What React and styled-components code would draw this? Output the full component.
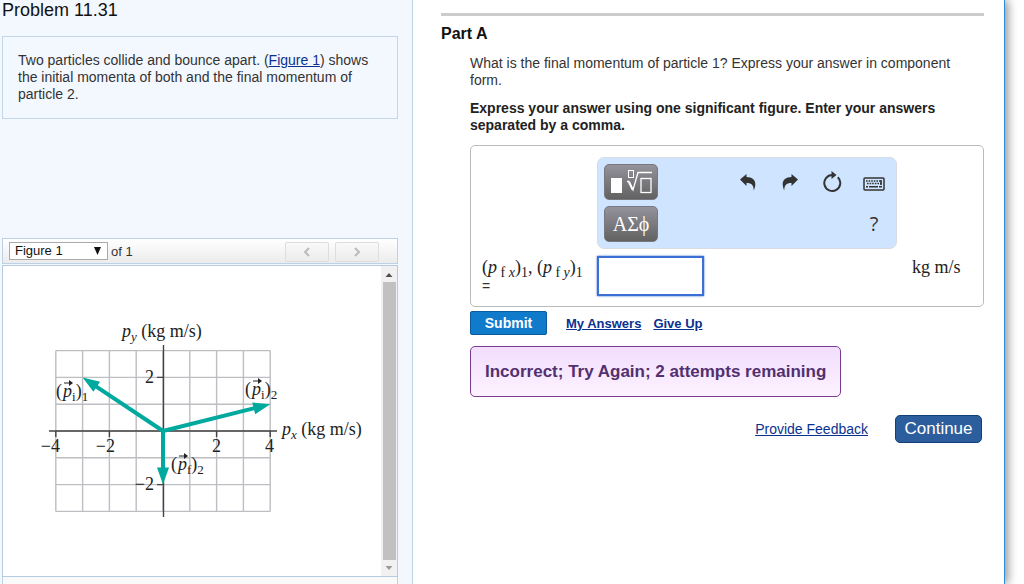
import React from "react";
import styled, { createGlobalStyle } from "styled-components";

const sans = '"Liberation Sans", Arial, sans-serif';
const serif = '"Liberation Serif", "Times New Roman", serif';

const Global = createGlobalStyle`
  *, *::before, *::after { box-sizing: border-box; }
  html, body, #root { height: 100%; }
  body {
    margin: 0;
    overflow: hidden;
    background: #fff;
    color: #333;
    font: 14px/17px ${sans};
  }
`;

const Shell = styled.div`
  display: flex;
  height: 100%;
  margin-right: 19px;
  border-right: 1px solid #2b8fdc;
  box-shadow: 2px 0 10px rgba(0, 0, 0, 0.5);
  background: #fff;
`;

const Sidebar = styled.aside`
  flex: 0 0 413px;
  display: flex;
  flex-direction: column;
  padding: 0 14px 0 2px;
  border-right: 1px solid #bcd1e4;
  background: #f3f8ff;
`;

const ProblemTitle = styled.h1`
  margin: 0 0 16px;
  color: #111;
  font-size: 18px;
  font-weight: 400;
  line-height: 20px;
`;

const Statement = styled.p`
  margin: 0 0 119px;
  padding: 15px;
  border: 1px solid #c4d6ea;
`;

const Link = styled.a`
  color: #0b318f;
  font-size: ${(p) => (p.$strong ? "13px" : "14px")};
  font-weight: ${(p) => (p.$strong ? 700 : 400)};
`;

const FigureBar = styled.div`
  display: flex;
  flex-shrink: 0;
  align-items: center;
  gap: 3px;
  height: 26px;
  margin-bottom: 1px;
  padding: 0 18px 0 6px;
  border: 1px solid #bcd1e8;
  background: linear-gradient(#fff, #ebebeb);
  font-size: 13px;
`;

const FigureSelect = styled.span`
  position: relative;
  display: flex;
  width: 99px;

  select {
    width: 100%;
    height: 18px;
    padding: 0 5px;
    border: 1px solid #aaa;
    border-radius: 0;
    appearance: none;
    background: #fff;
    color: #111;
    font: 13px/16px ${sans};
  }

  svg {
    position: absolute;
    top: 5px;
    right: 7px;
    pointer-events: none;
  }
`;

const Pager = styled.div`
  display: flex;
  gap: 6px;
  margin-left: auto;
  padding-top: 2px;
`;

const PagerButton = styled.button`
  display: flex;
  align-items: center;
  justify-content: center;
  width: 44px;
  height: 20px;
  padding: 0;
  border: 1px solid #ddd;
  border-radius: 2px;
  background: linear-gradient(#f9f9f9, #ececec);
`;

const FigureFrame = styled.div`
  display: flex;
  flex-shrink: 0;
  justify-content: space-between;
  height: 312px;
  border: 1px solid #b5cbe2;
  background: #fff;
`;

const Plot = styled.svg`
  display: block;
  margin: 52px 0 0 29px;
  font-family: ${serif};
  font-size: 18px;
  fill: #222;
`;

const ScrollTrack = styled.div`
  display: flex;
  flex-direction: column;
  align-items: center;
  width: 16px;
  background: #f1f1f1;

  svg { flex: 0 0 16px; }
`;

const ScrollThumb = styled.div`
  flex: 1;
  width: 13px;
  background: #c1c1c1;
`;

const NextPanel = styled.div`
  flex: 1;
  border: 1px solid #bcd1e8;
  border-width: 0 1px;
  background: #fafafa;
`;

const Main = styled.main`
  flex: 1;
  min-width: 0;
  padding: 13px 20px 0 28px;
`;

const Part = styled.section`
  border-top: 3px solid #ccc;
`;

const PartTitle = styled.h2`
  margin: 9px 0 12px;
  color: #111;
  font-size: 16px;
  line-height: 18px;
`;

const PartBody = styled.div`
  padding-left: 29px;
`;

const Prompt = styled.p`
  margin: 0 0 11px;
  font-weight: ${(p) => (p.$strong ? 700 : 400)};
  color: ${(p) => (p.$strong ? "#222" : "#333")};
`;

const AnswerBox = styled.form`
  display: grid;
  grid-template-columns: 116px 300px 1fr;
  gap: 7px 0;
  height: 162px;
  padding: 11px 10px;
  border: 1px solid #bbb;
  border-radius: 5px;
`;

const MathBar = styled.div`
  grid-column: 2;
  display: flex;
  justify-content: space-between;
  height: 92px;
  padding: 6px;
  border: 1px solid #d8dde4;
  border-radius: 7px;
  background: #cfe5ff;
`;

const MathKeys = styled.div`
  display: flex;
  flex-direction: column;
  gap: 6px;
`;

const MathKey = styled.button`
  display: flex;
  align-items: center;
  justify-content: center;
  width: 54px;
  height: 36px;
  padding: 0;
  border: 1px solid #77777d;
  border-radius: 5px;
  background: linear-gradient(#94929b, #626262);
  color: #fff;
  font: 20px/24px ${serif};
`;

const Tools = styled.div`
  display: grid;
  grid-template-columns: repeat(4, 42px);
  grid-template-rows: 36px 36px;
  gap: 6px 0;
  margin-right: -5px;
`;

const ToolButton = styled.button`
  display: flex;
  align-items: center;
  justify-content: center;
  padding: 0;
  border: 0;
  background: none;
  color: #333;
  font: 20px/24px "Open Sans", sans-serif;
  grid-column: ${(p) => p.$column};
`;

const AnswerLabel = styled.label`
  grid-column: 1;
  padding-left: 1px;
`;

const MathText = styled.span`
  color: #222;
  font-family: ${serif};
  font-size: 18px;
  line-height: 22px;
  white-space: nowrap;

  sub {
    font-size: 14px;
    line-height: 0;
    vertical-align: -4px;
  }
`;

const AnswerInput = styled.input`
  width: 107px;
  height: 40px;
  padding: 0 6px;
  border: 2px solid #3b6fd4;
  box-shadow: 0 0 2px #3b6fd4;
  outline: 0;
  font: 18px/22px ${serif};
`;

const Units = styled.div`
  padding-left: 15px;
`;

const Actions = styled.div`
  display: flex;
  align-items: center;
  gap: 12px;
  margin: 4px 0 11px;
`;

const Submit = styled.button`
  width: 77px;
  height: 24px;
  margin-right: 7px;
  padding: 0;
  border: 1px solid #0b5c9f;
  border-radius: 2px;
  background: #107acb;
  color: #fff;
  font: 700 14px/18px ${sans};
`;

const Result = styled.div`
  width: fit-content;
  padding: 16px 14px;
  border: 1px solid #783d91;
  border-radius: 5px;
  background: linear-gradient(#f2defd, #fdf2ff);
  color: #52306f;
  font-size: 17px;
  font-weight: 700;
`;

const Footer = styled.footer`
  display: flex;
  align-items: center;
  justify-content: flex-end;
  gap: 27px;
  margin: 18px 2px 0 0;
`;

const Continue = styled.button`
  width: 87px;
  height: 28px;
  padding: 0;
  border: 1px solid #123f78;
  border-radius: 5px;
  background: #2c5d9d;
  color: #fff;
  font: 17px/20px ${sans};
`;

const UNIT = 26.8;
const TEAL = "#00a99d";

function Vector({ x, y }) {
  const tipX = x * UNIT;
  const tipY = -y * UNIT;
  const length = Math.hypot(tipX, tipY);
  const angle = (Math.atan2(tipY, tipX) * 180) / Math.PI;
  return (
    <g transform={`rotate(${angle})`} fill={TEAL}>
      <rect x="0" y="-2" width={length - 12} height="4" />
      <path d={`M${length} 0l-17-6v12z`} />
    </g>
  );
}

function VectorLabel({ x, y, kind, index }) {
  return (
    <g transform={`translate(${x} ${y})`}>
      <text>
        (<tspan fontStyle="italic" dx="1">p</tspan>
        <tspan fontSize="13" dy="4">{kind}</tspan>
        <tspan dy="-4">)</tspan>
        <tspan fontSize="13" dy="4">{index}</tspan>
      </text>
      <path d="M8 -14h6" stroke="#222" />
      <path d="M17 -14l-4-3v6z" />
    </g>
  );
}

function MomentumPlot() {
  const columns = [-4, -3, -2, -1, 0, 1, 2, 3, 4];
  const rows = [-3, -2, -1, 0, 1, 2, 3];
  return (
    <Plot width="346" height="204" viewBox="-131 -113 346 204" role="img" aria-label="Momentum vectors">
      <g stroke="#bdbec1" strokeWidth="1.4">
        {columns.map((c) => (
          <line key={c} x1={c * UNIT} x2={c * UNIT} y1={-3 * UNIT} y2={3 * UNIT} />
        ))}
        {rows.map((r) => (
          <line key={r} y1={r * UNIT} y2={r * UNIT} x1={-4 * UNIT} x2={4 * UNIT} />
        ))}
      </g>
      <g stroke="#444" strokeWidth="1.4">
        <path d="M-114 0H114M0.500 -86V86" />
        <path d="M-107.200 0v6M-53.600 0v6M53.600 0v6M107.200 0v6M-6 -53.600H0M-6 53.600H0" />
      </g>
      <Vector x={-3} y={2} />
      <Vector x={4} y={1} />
      <Vector x={0} y={-2} />
      <VectorLabel x="-107" y="-34" kind="i" index="1" />
      <VectorLabel x="82" y="-36" kind="i" index="2" />
      <VectorLabel x="8" y="39" kind="f" index="2" />
      <text x="-41" y="-94">
        <tspan fontStyle="italic">p</tspan>
        <tspan fontStyle="italic" fontSize="13" dy="4">y</tspan>
        <tspan dy="-4"> (kg m/s)</tspan>
      </text>
      <text x="119" y="4">
        <tspan fontStyle="italic">p</tspan>
        <tspan fontStyle="italic" fontSize="13" dy="4">x</tspan>
        <tspan dy="-4"> (kg m/s)</tspan>
      </text>
      <g textAnchor="end">
        <text x="-103" y="21">−4</text>
        <text x="-48" y="21">−2</text>
        <text x="58" y="21">2</text>
        <text x="111" y="21">4</text>
        <text x="-9" y="-48">2</text>
        <text x="-9" y="59">−2</text>
      </g>
    </Plot>
  );
}

function CurvedArrow({ flip }) {
  return (
    <svg width="16" height="18" viewBox="0 0 16 18" aria-hidden="true">
      <path
        transform={flip ? "translate(16 0) scale(-1 1)" : undefined}
        fill="currentColor"
        d="M0 6.500L6.500 1v3c5.800 0 8.800 3 8.800 7 0 2.300-.6 4.500-1.600 6.500.1-5-1.700-7.500-7.200-7.500v3z"
      />
    </svg>
  );
}

function ResetIcon() {
  return (
    <svg width="20" height="22" viewBox="0 0 20 22" fill="none" aria-hidden="true">
      <path d="M10.500 4a8 8 0 1 0 5.300 2.200" stroke="currentColor" strokeWidth="2" />
      <path d="M9.500 0l5 4-5 4z" fill="currentColor" />
    </svg>
  );
}

function KeyboardIcon() {
  return (
    <svg width="22" height="18" viewBox="0 0 22 18" fill="none" stroke="currentColor" aria-hidden="true">
      <rect x="1" y="5" width="20" height="12" rx="1" strokeWidth="1.500" />
      <path d="M3 8h16M4 10.500h15" strokeWidth="1.700" strokeDasharray="1.600 1" />
      <path d="M3 13.700h2M6 13.700h9M16 13.700h3M18 7v5" strokeWidth="1.600" />
    </svg>
  );
}

function TemplateIcon() {
  return (
    <svg width="42" height="26" viewBox="0 0 42 26" fill="none" stroke="#fff" aria-hidden="true">
      <path d="M1 9h11v15H1z" fill="#fff" stroke="none" />
      <rect x="18.500" y="1.500" width="5" height="7" />
      <path d="M17 12.500h2l4 8.500L28 3.500h14" strokeWidth="1.300" />
      <path d="M19 13l3.500 7.500" strokeWidth="2" />
      <rect x="31" y="9.500" width="10" height="14" strokeWidth="1.300" />
    </svg>
  );
}

function MomentumComponent({ axis }) {
  return (
    <>
      (<i>p</i>
      <sub> f <i>{axis}</i></sub>)<sub>1</sub>
    </>
  );
}

export default function App() {
  return (
    <>
      <Global />
      <Shell>
        <Sidebar>
          <ProblemTitle>Problem 11.31</ProblemTitle>
          <Statement>
            Two particles collide and bounce apart. (<Link href="#figure">Figure 1</Link>) shows the
            initial momenta of both and the final momentum of particle 2.
          </Statement>
          <FigureBar>
            <FigureSelect>
              <select aria-label="Figure">
                <option>Figure 1</option>
              </select>
              <svg width="7" height="8" viewBox="0 0 7 8" aria-hidden="true">
                <path d="M0 0h7L3.500 8z" fill="#111" />
              </svg>
            </FigureSelect>
            <span>of 1</span>
            <Pager>
              <PagerButton type="button" aria-label="Previous figure">
                <svg width="8" height="10" viewBox="0 0 8 10" fill="none" stroke="#bbb" strokeWidth="2">
                  <path d="M6 1L2 5l4 4" />
                </svg>
              </PagerButton>
              <PagerButton type="button" aria-label="Next figure">
                <svg width="8" height="10" viewBox="0 0 8 10" fill="none" stroke="#bbb" strokeWidth="2">
                  <path d="M2 1l4 4-4 4" />
                </svg>
              </PagerButton>
            </Pager>
          </FigureBar>
          <FigureFrame id="figure">
            <MomentumPlot />
            <ScrollTrack aria-hidden="true">
              <svg width="16" height="16" viewBox="0 0 16 16">
                <path d="M4.500 11h7L8 7z" fill="#505050" />
              </svg>
              <ScrollThumb />
              <svg width="16" height="16" viewBox="0 0 16 16">
                <path d="M4.500 6h7L8 10z" fill="#999" />
              </svg>
            </ScrollTrack>
          </FigureFrame>
          <NextPanel />
        </Sidebar>

        <Main>
          <Part>
            <PartTitle>Part A</PartTitle>
            <PartBody>
              <Prompt>
                What is the final momentum of particle 1? Express your answer in component form.
              </Prompt>
              <Prompt $strong>
                Express your answer using one significant figure. Enter your answers separated by a
                comma.
              </Prompt>
              <AnswerBox>
                <MathBar>
                  <MathKeys>
                    <MathKey type="button" aria-label="Templates">
                      <TemplateIcon />
                    </MathKey>
                    <MathKey type="button">ΑΣϕ</MathKey>
                  </MathKeys>
                  <Tools>
                    <ToolButton type="button" aria-label="Undo"><CurvedArrow /></ToolButton>
                    <ToolButton type="button" aria-label="Redo"><CurvedArrow flip /></ToolButton>
                    <ToolButton type="button" aria-label="Reset"><ResetIcon /></ToolButton>
                    <ToolButton type="button" aria-label="Keyboard shortcuts"><KeyboardIcon /></ToolButton>
                    <ToolButton type="button" $column={4}>?</ToolButton>
                  </Tools>
                </MathBar>
                <AnswerLabel htmlFor="answer">
                  <MathText>
                    <MomentumComponent axis="x" />, <MomentumComponent axis="y" />
                  </MathText>
                  <br />=
                </AnswerLabel>
                <AnswerInput id="answer" type="text" />
                <Units><MathText>kg m/s</MathText></Units>
              </AnswerBox>
              <Actions>
                <Submit type="button">Submit</Submit>
                <Link href="#answers" $strong>My Answers</Link>
                <Link href="#give-up" $strong>Give Up</Link>
              </Actions>
              <Result role="status">Incorrect; Try Again; 2 attempts remaining</Result>
            </PartBody>
          </Part>
          <Footer>
            <Link href="#feedback">Provide Feedback</Link>
            <Continue type="button">Continue</Continue>
          </Footer>
        </Main>
      </Shell>
    </>
  );
}
